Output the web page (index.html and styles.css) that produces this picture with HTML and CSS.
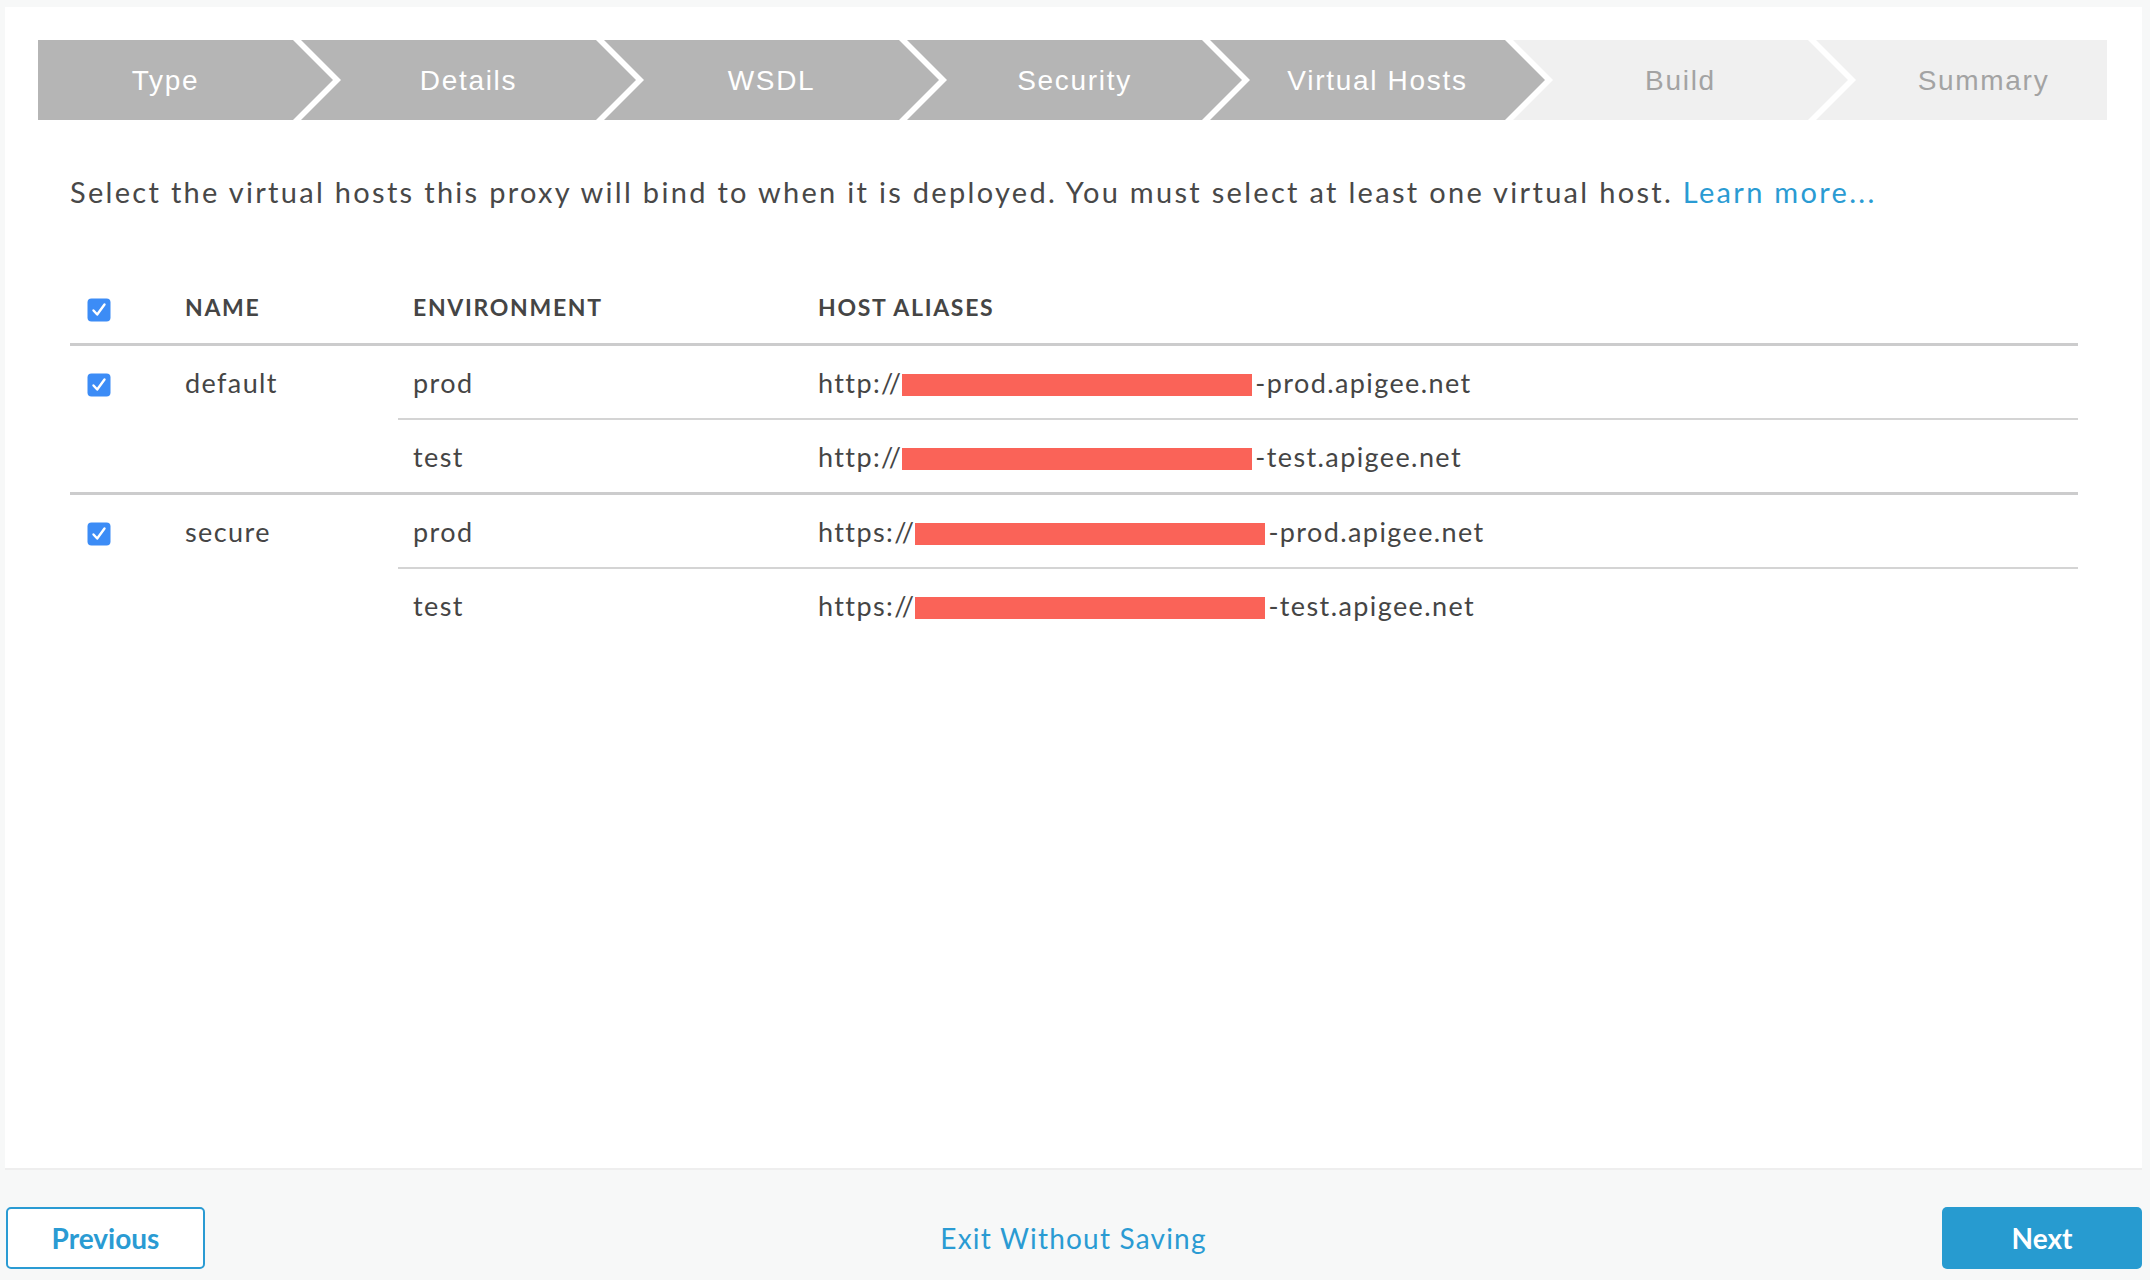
FILE: index.html
```html
<!DOCTYPE html>
<html lang="en">
<head>
<meta charset="utf-8">
<title>Virtual Hosts</title>
<link rel="stylesheet" href="styles.css">
</head>
<body>
<div class="page">
  <main class="panel">
    <div class="stepper">
      <ol class="steps">
        <li class="step done first">Type</li>
        <li class="step done">Details</li>
        <li class="step done">WSDL</li>
        <li class="step done">Security</li>
        <li class="step done">Virtual Hosts</li>
        <li class="step">Build</li>
        <li class="step last">Summary</li>
      </ol>
    </div>

    <p class="desc">Select the virtual hosts this proxy will bind to when it is deployed. You must select at least one virtual host. <a class="link" href="#">Learn more...</a></p>

    <table class="hosts">
      <colgroup>
        <col class="c-check">
        <col class="c-name">
        <col class="c-env">
        <col class="c-host">
      </colgroup>
      <thead>
        <tr>
          <th class="cell-check"><span class="cbox"><svg viewBox="0 0 24 24" width="24" height="24"><rect x="0.5" y="0.5" width="23" height="23" rx="4" fill="#3c8cf6"/><path d="M6.5 12.5 L10.2 16.5 L17.5 6.5" fill="none" stroke="#fff" stroke-width="2.4" stroke-linecap="round" stroke-linejoin="round"/></svg></span></th>
          <th>NAME</th>
          <th>ENVIRONMENT</th>
          <th>HOST ALIASES</th>
        </tr>
      </thead>
      <tbody>
        <tr>
          <td class="cell-check" rowspan="2"><span class="cbox"><svg viewBox="0 0 24 24" width="24" height="24"><rect x="0.5" y="0.5" width="23" height="23" rx="4" fill="#3c8cf6"/><path d="M6.5 12.5 L10.2 16.5 L17.5 6.5" fill="none" stroke="#fff" stroke-width="2.4" stroke-linecap="round" stroke-linejoin="round"/></svg></span></td>
          <td class="cell-name" rowspan="2">default</td>
          <td>prod</td>
          <td>http://<span class="redact"></span>-prod.apigee.net</td>
        </tr>
        <tr class="sub">
          <td>test</td>
          <td>http://<span class="redact"></span>-test.apigee.net</td>
        </tr>
      </tbody>
      <tbody>
        <tr>
          <td class="cell-check" rowspan="2"><span class="cbox"><svg viewBox="0 0 24 24" width="24" height="24"><rect x="0.5" y="0.5" width="23" height="23" rx="4" fill="#3c8cf6"/><path d="M6.5 12.5 L10.2 16.5 L17.5 6.5" fill="none" stroke="#fff" stroke-width="2.4" stroke-linecap="round" stroke-linejoin="round"/></svg></span></td>
          <td class="cell-name" rowspan="2">secure</td>
          <td>prod</td>
          <td>https://<span class="redact"></span>-prod.apigee.net</td>
        </tr>
        <tr class="sub">
          <td>test</td>
          <td>https://<span class="redact"></span>-test.apigee.net</td>
        </tr>
      </tbody>
    </table>
  </main>

  <footer class="footer">
    <button class="btn btn-outline" type="button">Previous</button>
    <a class="exit" href="#">Exit Without Saving</a>
    <button class="btn btn-primary" type="button">Next</button>
  </footer>
</div>
</body>
</html>
```

FILE: styles.css
```css
html, body {
  margin: 0;
  padding: 0;
}

body {
  background: #f7f8f8;
  font-family: "Lato", "Liberation Sans", sans-serif;
  color: #454545;
  width: 2150px;
  height: 1280px;
  overflow: hidden;
}

.page {
  padding: 7px 8px 0 5px;
  display: flex;
  flex-direction: column;
}

.panel {
  background: #ffffff;
  height: 1163px;
  border-bottom: 2px solid #eeeeee;
  padding: 33px 35px 0 33px;
  box-sizing: border-box;
}

/* Stepper */
.stepper {
  height: 80px;
  overflow: hidden;
}

.steps {
  list-style: none;
  margin: 0 0 0 -40px;
  padding: 0;
  display: flex;
  height: 80px;
}

.step {
  flex: 0 0 335px;
  margin-right: -32px;
  height: 80px;
  padding-top: 2px;
  box-sizing: border-box;
  display: flex;
  align-items: center;
  justify-content: center;
  background: #f0f0f0;
  color: #a3a3a3;
  font-family: "Liberation Sans", Arial, sans-serif;
  font-size: 28px;
  letter-spacing: 1.7px;
  clip-path: polygon(0 0, calc(100% - 40px) 0, 100% 50%, calc(100% - 40px) 100%, 0 100%, 40px 50%);
}

.step.done {
  background: #b5b5b5;
  color: #ffffff;
}

/* Description */
.desc {
  margin: 52px 0 0 32px;
  font-size: 29px;
  line-height: 40px;
  letter-spacing: 2.3px;
  color: #484848;
}

.link {
  color: #2a9bd3;
  text-decoration: none;
}

/* Table */
.hosts {
  margin: 59px 0 0 32px;
  width: 2008px;
  border-collapse: collapse;
  table-layout: fixed;
  font-size: 27px;
  letter-spacing: 1.4px;
}

.c-check { width: 100px; }
.c-name { width: 228px; }
.c-env { width: 405px; }

.hosts th {
  text-align: left;
  font-weight: 700;
  font-size: 23px;
  letter-spacing: 1.7px;
  color: #454545;
  height: 72px;
  padding: 0 0 0 15px;
  border-bottom: 3px solid #cccccd;
}

.hosts td {
  height: 72px;
  padding: 0 0 0 15px;
  vertical-align: middle;
  white-space: nowrap;
}

.hosts th.cell-check,
.hosts td.cell-check {
  padding-left: 17px;
}

.hosts td.cell-check,
.hosts td.cell-name {
  vertical-align: top;
  padding-top: 19px;
}

.hosts td.cell-name {
  padding-top: 20px;
}

.hosts tbody + tbody {
  border-top: 3px solid #cccccd;
}

.hosts tr.sub td {
  border-top: 2px solid #d4d4d4;
}

.cbox {
  display: inline-block;
  width: 24px;
  height: 24px;
  vertical-align: middle;
}

.cbox svg {
  display: block;
}

.redact {
  display: inline-block;
  width: 350px;
  height: 22px;
  background: #fa6358;
  margin: 0 3px 0 0;
  vertical-align: -3px;
}

/* Footer */
.footer {
  display: flex;
  align-items: center;
  justify-content: space-between;
  padding: 37px 0 0 1px;
}

.btn {
  font-family: "Lato", "Liberation Sans", sans-serif;
  font-weight: 700;
  font-size: 28px;
  height: 62px;
  border-radius: 5px;
  box-sizing: border-box;
  cursor: pointer;
}

.btn-outline {
  width: 199px;
  background: #ffffff;
  border: 2px solid #2a9bd3;
  color: #2a9bd3;
}

.btn-primary {
  width: 200px;
  background: #279bd0;
  border: none;
  color: #ffffff;
}

.exit {
  font-size: 28px;
  letter-spacing: 1.2px;
  color: #2a9bd3;
  text-decoration: none;
}
```
